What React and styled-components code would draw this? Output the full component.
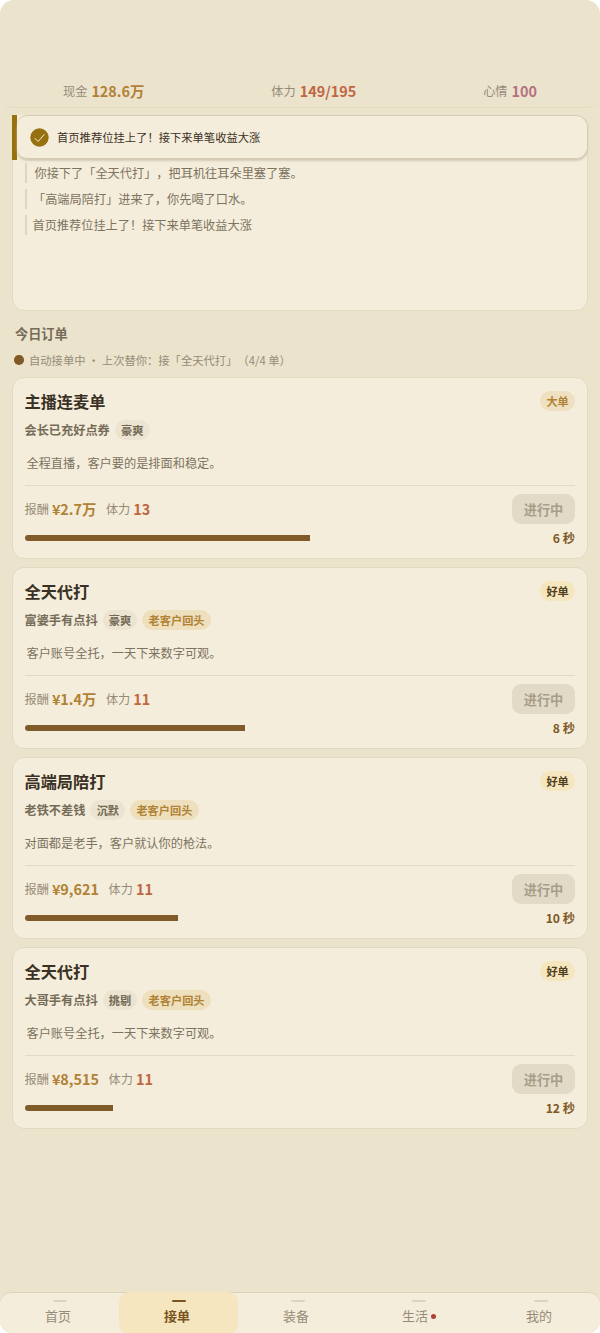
import styled, { createGlobalStyle } from "styled-components";

const GlobalStyle = createGlobalStyle`
  * {
    box-sizing: border-box;
  }
  body {
    margin: 0;
    background-color: #fff;
    font-family: "Noto Sans CJK SC", sans-serif;
    text-spacing-trim: space-all;
    color: #3a3024;
  }
`;

const Page = styled.div`
  width: 600px;
  height: 1333px;
  display: flex;
  flex-direction: column;
  background-color: #ece3cd;
  border-radius: 14px 14px 12px 12px;
  overflow: hidden;
`;

const Header = styled.header`
  height: 108px;
  flex-shrink: 0;
  display: flex;
  justify-content: space-between;
  align-items: flex-end;
  padding: 0 63px 4px;
  border-bottom: 1px solid #e6dac1;
  border-radius: 14px;
`;

const Stat = styled.div`
  display: flex;
  align-items: center;
  height: 24px;
  gap: ${(props) => props.$gap || 4}px;
  white-space: nowrap;
`;

const Label = styled.span`
  font-size: 12.2px;
  line-height: 20px;
  color: #958c78;
`;

const Value = styled.span`
  font-size: 14.4px;
  line-height: 20px;
  font-weight: 700;
  color: ${(props) => props.$color};
`;

const Main = styled.main`
  flex: 1;
  padding: 7px 12px 0;
`;

const LogPanel = styled.section`
  position: relative;
  height: 196px;
  padding: 47px 11.5px 0;
  background-color: #f5eddb;
  border: 1px solid #e2d9c1;
  border-radius: 12px;
`;

const LogLine = styled.p`
  margin: 0 0 6px;
  height: 20px;
  padding-left: ${(props) => props.$indent}px;
  border-left: 2px solid #ddd5c0;
  font-size: 12.2px;
  line-height: 20px;
  color: #7c7360;
`;

const Toast = styled.div`
  position: absolute;
  top: -1px;
  left: -1px;
  right: -1px;
  height: 45px;
  display: flex;
  background-color: #f5eddb;
  border-left: 5px solid #97700f;
  border-radius: 0 12px 12px 0;
`;

const ToastBody = styled.div`
  flex: 1;
  height: 44px;
  display: flex;
  align-items: center;
  gap: 8px;
  padding-left: 13px;
  border: 1px solid #d5cbb4;
  border-left: none;
  border-radius: 10px 12px 12px 10px;
  box-shadow: 0 2px 2px #d5ccb5;
  background-color: #f5eddb;
  font-size: 11.3px;
  color: #3a3024;
`;

const SectionTitle = styled.h2`
  margin: 13px 3px 0;
  font-size: 13.2px;
  line-height: 20px;
  font-weight: 600;
  color: #756c58;
`;

const AutoStatus = styled.div`
  display: flex;
  align-items: center;
  gap: 5.5px;
  height: 20px;
  margin: 6px 2px 7px;
  font-size: 11.3px;
  white-space: pre;
  color: #958c78;
`;

const StatusDot = styled.span`
  width: 9.5px;
  height: 9.5px;
  border-radius: 50%;
  background-color: #7f5926;
`;

const OrderList = styled.div`
  display: flex;
  flex-direction: column;
  gap: 8.5px;
`;

const Card = styled.article`
  height: 181.5px;
  padding: 13px 12px 0 11.5px;
  background-color: #f5eddb;
  border: 1px solid #e2d9c1;
  border-radius: 12px;
`;

const Row = styled.div`
  display: flex;
  align-items: center;
  justify-content: space-between;
  height: ${(props) => props.$height}px;
`;

const CardTitle = styled.h3`
  margin: 0;
  font-size: 16.2px;
  line-height: 22px;
  font-weight: 700;
`;

const tones = {
  plain: ["#ece4d0", "#716854"],
  repeat: ["#eee0bd", "#b08236"],
  big: ["#eee0c1", "#b08236"],
  good: ["#f5e6bd", "#513e1d"],
};

const Tag = styled.span`
  height: 20.5px;
  padding: 0 6.2px;
  border-radius: 11px;
  font-size: 11.2px;
  line-height: 20.5px;
  font-weight: 600;
  background-color: ${(props) => tones[props.$tone][0]};
  color: ${(props) => tones[props.$tone][1]};
`;

const Client = styled.div`
  display: flex;
  align-items: center;
  gap: 5px;
  height: 20px;
  margin-top: 9px;
  font-size: 12.2px;
  font-weight: 600;
  color: #756c58;
`;

const Desc = styled.p`
  margin: 13px 0 12px;
  padding-left: ${(props) => props.$indent}px;
  font-size: 12.2px;
  line-height: 20px;
  color: #7c7360;
`;

const Pay = styled.div`
  display: flex;
  gap: 9.5px;
`;

const CardFooter = styled.div`
  padding-top: 8px;
  border-top: 1px solid #e3dac4;
`;

const Button = styled.button`
  width: 63px;
  height: 30px;
  padding: 0;
  border: none;
  border-radius: 9px;
  background-color: #e2dac6;
  color: #a79d88;
  font-family: inherit;
  font-size: 13.2px;
  font-weight: 600;
`;

const Bar = styled.div`
  height: 6.5px;
  border-radius: 4px 0 0 4px;
  background-color: #7f5b2a;
`;

const Seconds = styled.span`
  font-size: 12.2px;
  font-weight: 600;
  line-height: 18px;
  color: #7f5926;
`;

const Nav = styled.nav`
  display: grid;
  grid-template-columns: 119px 119px 119px 124px 119px;
  height: 41px;
  flex-shrink: 0;
  background-color: #f5eddb;
  border-top: 1px solid #dcd3bc;
  border-radius: 12px;
`;

const NavItem = styled.a`
  display: flex;
  flex-direction: column;
  align-items: center;
  height: 42px;
  margin-top: -1px;
  padding: 8px 0 0;
  border-radius: 10px;
  background-color: ${(props) => (props.$active ? "#f6e6bf" : "transparent")};
  color: ${(props) => (props.$active ? "#7a5522" : "#958c78")};
  font-size: 13px;
  font-weight: ${(props) => (props.$active ? 700 : 400)};
  line-height: 20px;
`;

const NavMark = styled.span`
  width: 14px;
  height: 2px;
  margin-bottom: 4px;
  border-radius: 1px;
  background-color: ${(props) => (props.$active ? "#7a5522" : "#dcd4c0")};
`;

const NavText = styled.span`
  display: flex;
  align-items: center;
  gap: 3px;
  padding-right: ${(props) => (props.$dot ? 0 : 3)}px;
`;

const NavDot = styled.span`
  width: 5px;
  height: 5px;
  border-radius: 50%;
  background-color: #ab4235;
`;

const orders = [
  { title: "主播连麦单", grade: "大单", tone: "big", client: "会长已充好点券", mood: "豪爽", desc: "全程直播，客户要的是排面和稳定。", indent: 2, pay: "¥2.7万", cost: 13, width: 285, left: 6 },
  { title: "全天代打", grade: "好单", tone: "good", client: "富婆手有点抖", mood: "豪爽", repeat: true, desc: "客户账号全托，一天下来数字可观。", indent: 2, pay: "¥1.4万", cost: 11, width: 220, left: 8 },
  { title: "高端局陪打", grade: "好单", tone: "good", client: "老铁不差钱", mood: "沉默", repeat: true, desc: "对面都是老手，客户就认你的枪法。", indent: 0, pay: "¥9,621", cost: 11, width: 153.5, left: 10 },
  { title: "全天代打", grade: "好单", tone: "good", client: "大哥手有点抖", mood: "挑剔", repeat: true, desc: "客户账号全托，一天下来数字可观。", indent: 2, pay: "¥8,515", cost: 11, width: 88, left: 12 },
];

const tabs = [
  { name: "首页" },
  { name: "接单", active: true },
  { name: "装备" },
  { name: "生活", dot: true },
  { name: "我的" },
];

const CheckIcon = () => (
  <svg width="19" height="19" viewBox="0 0 19 19" fill="none">
    <circle cx="9.5" cy="9.5" r="9.2" fill="#97700f" />
    <path d="M4.8 10.2 8.1 13.5 14.4 6.3" stroke="#f5eddb" strokeWidth="1" />
  </svg>
);

const Order = ({ order }) => {
  return (
    <Card>
      <Row $height={20}>
        <CardTitle>{order.title}</CardTitle>
        <Tag $tone={order.tone}>{order.grade}</Tag>
      </Row>
      <Client>
        {order.client}
        <Tag $tone="plain">{order.mood}</Tag>
        {order.repeat && <Tag $tone="repeat">老客户回头</Tag>}
      </Client>
      <Desc $indent={order.indent}>{order.desc}</Desc>
      <CardFooter>
        <Row $height={30}>
          <Pay>
            <Stat $gap={3}>
              <Label>报酬</Label>
              <Value $color="#b08236">{order.pay}</Value>
            </Stat>
            <Stat $gap={3}>
              <Label>体力</Label>
              <Value $color="#c06643">{order.cost}</Value>
            </Stat>
          </Pay>
          <Button>进行中</Button>
        </Row>
        <Row $height={28}>
          <Bar style={{ width: order.width }} />
          <Seconds>{order.left} 秒</Seconds>
        </Row>
      </CardFooter>
    </Card>
  );
};

const App = () => {
  return (
    <>
      <GlobalStyle />
      <Page>
        <Header>
          <Stat>
            <Label>现金</Label>
            <Value $color="#b08236">128.6万</Value>
          </Stat>
          <Stat>
            <Label>体力</Label>
            <Value $color="#c06643">149/195</Value>
          </Stat>
          <Stat>
            <Label>心情</Label>
            <Value $color="#b57182">100</Value>
          </Stat>
        </Header>
        <Main>
          <LogPanel>
            <LogLine $indent={8}>你接下了「全天代打」，把耳机往耳朵里塞了塞。</LogLine>
            <LogLine $indent={6.5}>「高端局陪打」进来了，你先喝了口水。</LogLine>
            <LogLine $indent={6}>首页推荐位挂上了！接下来单笔收益大涨</LogLine>
            <Toast>
              <ToastBody>
                <CheckIcon />
                首页推荐位挂上了！接下来单笔收益大涨
              </ToastBody>
            </Toast>
          </LogPanel>
          <SectionTitle>今日订单</SectionTitle>
          <AutoStatus>
            <StatusDot />
            自动接单中 · 上次替你：接「全天代打」（4/4 单）
          </AutoStatus>
          <OrderList>
            {orders.map((order, i) => (
              <Order key={i} order={order} />
            ))}
          </OrderList>
        </Main>
        <Nav>
          {tabs.map((tab) => (
            <NavItem key={tab.name} $active={tab.active}>
              <NavMark $active={tab.active} />
              <NavText $dot={tab.dot}>
                {tab.name}
                {tab.dot && <NavDot />}
              </NavText>
            </NavItem>
          ))}
        </Nav>
      </Page>
    </>
  );
};

export default App;
